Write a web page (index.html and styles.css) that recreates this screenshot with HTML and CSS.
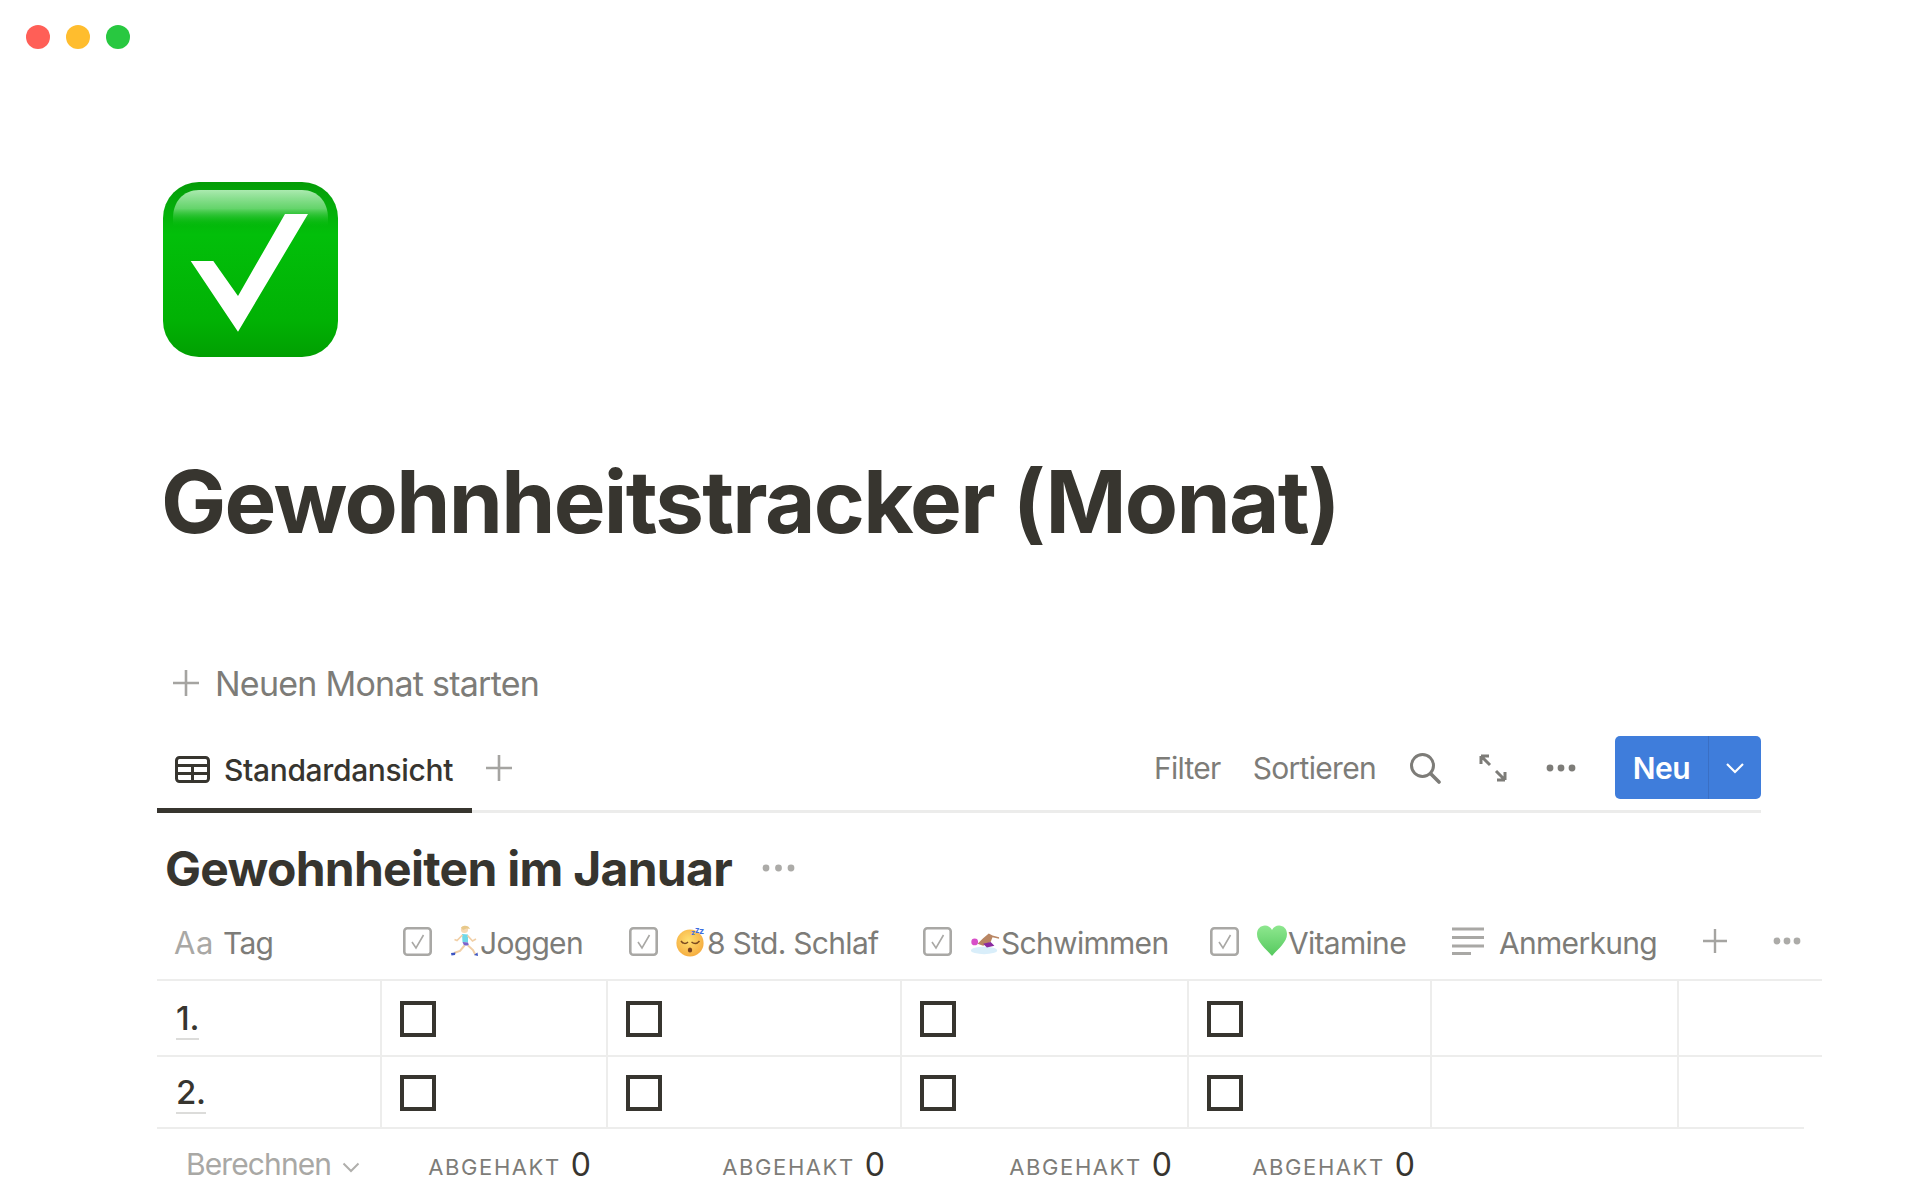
FILE: index.html
```html
<!DOCTYPE html>
<html lang="de">
<head>
<meta charset="utf-8">
<title>Gewohnheitstracker (Monat)</title>
<link rel="stylesheet" href="styles.css">
</head>
<body>
<div class="window-controls">
  <span class="dot dot-red"></span>
  <span class="dot dot-yellow"></span>
  <span class="dot dot-green"></span>
</div>
<main class="page">
  <svg class="page-icon" viewBox="0 0 175 175" aria-hidden="true">
    <defs>
      <linearGradient id="gbase" x1="0" y1="0" x2="0" y2="1">
        <stop offset="0" stop-color="#049c06"/><stop offset=".06" stop-color="#05a30a"/><stop offset=".3" stop-color="#02bf0a"/><stop offset=".8" stop-color="#01b104"/><stop offset="1" stop-color="#019f02"/>
      </linearGradient>
      <linearGradient id="ggloss" x1="0" y1="0" x2="0" y2="1">
        <stop offset="0" stop-color="#bdf2c2" stop-opacity=".9"/><stop offset=".5" stop-color="#a5eeac" stop-opacity=".6"/><stop offset="1" stop-color="#02bf0a" stop-opacity="0"/>
      </linearGradient>
    </defs>
    <rect width="175" height="175" rx="36" fill="url(#gbase)"/>
    <path d="M10 45V36C10 20 20 8 36 8H139C155 8 165 20 165 36V45Z" fill="url(#ggloss)"/>
    <path d="M27.700 79H50.300L75 114L122 32H145L75 149.700Z" fill="#fff"/>
  </svg>
  <h1 class="title">Gewohnheitstracker (Monat)</h1>
  <div class="new-month">
    <svg class="plus-lg" viewBox="0 0 28 28"><path d="M14 1V27M1 14H27" stroke="#a5a4a1" stroke-width="2.6" fill="none"/></svg>
    <span>Neuen Monat starten</span>
  </div>
  <div class="tabs">
    <div class="tab">
      <svg class="tab-icon" viewBox="0 0 35 27"><rect x="1.500" y="1.500" width="32" height="24" rx="3" fill="none" stroke="#37352f" stroke-width="3"/><path d="M1.500 9.500H33.500M1.500 17.500H33.500M17.500 9.500V25.500" stroke="#37352f" stroke-width="3" fill="none"/></svg>
      <span>Standardansicht</span>
    </div>
    <svg class="plus-lg tab-plus" viewBox="0 0 28 28"><path d="M14 1V27M1 14H27" stroke="#a5a4a1" stroke-width="2.6" fill="none"/></svg>
    <div class="toolbar">
      <span class="tool tool-filter">Filter</span>
      <span class="tool tool-sort">Sortieren</span>
      <svg class="tool-search" viewBox="0 0 32 32"><circle cx="13.500" cy="13.500" r="11" fill="none" stroke="#7d7c78" stroke-width="3"/><path d="M21.500 21.500L30 30" stroke="#7d7c78" stroke-width="3.600" stroke-linecap="round"/></svg>
      <svg class="tool-expand" viewBox="0 0 28 28"><path d="M2 2H10M2 2V10M2 2L11 11M26 26H18M26 26V18M26 26L17 17" stroke="#7d7c78" stroke-width="3" fill="none"/></svg>
      <svg class="tool-dots" viewBox="0 0 30 8"><circle cx="4" cy="4" r="3.400" fill="#7d7c78"/><circle cx="15" cy="4" r="3.400" fill="#7d7c78"/><circle cx="26" cy="4" r="3.400" fill="#7d7c78"/></svg>
      <div class="new-button">
        <span class="new-label">Neu</span>
        <span class="new-caret"><svg viewBox="0 0 20 12"><path d="M2 2L10 10L18 2" stroke="#fff" stroke-width="2.200" fill="none"/></svg></span>
      </div>
    </div>
  </div>
  <div class="table-head">
    <h2 class="table-title">Gewohnheiten im Januar</h2>
    <svg class="title-dots" viewBox="0 0 33 8"><circle cx="4" cy="4" r="3.400" fill="#acaba8"/><circle cx="16.500" cy="4" r="3.400" fill="#acaba8"/><circle cx="29" cy="4" r="3.400" fill="#acaba8"/></svg>
  </div>
  <div class="table">
    <div class="row header-row">
      <div class="hcell c1"><span class="aa">Aa</span><span>Tag</span></div>
      <div class="hcell c2">
        <svg class="prop-check" viewBox="0 0 29 29"><rect x="1.300" y="1.300" width="26.400" height="26.400" rx="3" fill="none" stroke="#a9a8a5" stroke-width="2.600"/><path d="M9 15L13 21L20.500 8" stroke="#a9a8a5" stroke-width="1.600" fill="none"/></svg>
        <svg class="emoji emoji-run" viewBox="0 0 30 32"><circle cx="14.500" cy="4.500" r="3.600" fill="#f6d9b4"/><path d="M11 2.500C14 -0.500 19 .5 20 4C18 3 15 3.500 13 5Z" fill="#e8c98a"/><path d="M12 9L18 9.500L18 17.500L12.500 17Z" fill="#6fd8e8"/><path d="M12.500 17L18 17.500L19 20.500L14 20.500Z" fill="#7b63c9"/><path d="M12.500 10L7 15.500L4.500 14.500" stroke="#f1cfa6" stroke-width="1.700" fill="none"/><path d="M17.500 10.500L22.500 16L26 14" stroke="#f1cfa6" stroke-width="1.700" fill="none"/><path d="M14.500 20.500L10 26L4 28" stroke="#f1cfa6" stroke-width="2" fill="none"/><path d="M18 20.500L23 25L25.500 30" stroke="#f1cfa6" stroke-width="2" fill="none"/><path d="M1 28L5.500 27.500L5 30L1.500 30.500Z" fill="#3d56c4"/><path d="M24 30L27.500 27.500L28 31Z" fill="#3d56c4"/></svg>
        <span>Joggen</span>
      </div>
      <div class="hcell c3">
        <svg class="prop-check" viewBox="0 0 29 29"><rect x="1.300" y="1.300" width="26.400" height="26.400" rx="3" fill="none" stroke="#a9a8a5" stroke-width="2.600"/><path d="M9 15L13 21L20.500 8" stroke="#a9a8a5" stroke-width="1.600" fill="none"/></svg>
        <svg class="emoji" viewBox="0 0 30 32"><defs><radialGradient id="gsleep" cx=".45" cy=".4" r=".65"><stop offset="0" stop-color="#ffdf70"/><stop offset="1" stop-color="#f5a93c"/></radialGradient></defs><circle cx="14" cy="18" r="13.600" fill="url(#gsleep)"/><path d="M5 16C7 19 10 19 12 17M15.500 17C18 19 21 19 23.500 16" stroke="#7a4a20" stroke-width="1.500" fill="none"/><ellipse cx="14" cy="25" rx="2.200" ry="2.600" fill="#7a4320"/><text class="zzz zzz-a" x="15" y="10">z</text><text class="zzz zzz-b" x="19" y="8">z</text><text class="zzz zzz-c" x="23" y="9">z</text></svg>
        <span>8 Std. Schlaf</span>
      </div>
      <div class="hcell c4">
        <svg class="prop-check" viewBox="0 0 29 29"><rect x="1.300" y="1.300" width="26.400" height="26.400" rx="3" fill="none" stroke="#a9a8a5" stroke-width="2.600"/><path d="M9 15L13 21L20.500 8" stroke="#a9a8a5" stroke-width="1.600" fill="none"/></svg>
        <svg class="emoji" viewBox="0 0 32 32"><ellipse cx="15" cy="26" rx="14" ry="4" fill="#d9eefa"/><path d="M8 19L14 13L20 8L24 10L31 12L31 13.500L24 12L22 17L14 21Z" fill="#b98663"/><path d="M14 19L22 17L26 21L18 23Z" fill="#8a2aa0"/><circle cx="5" cy="17" r="3.600" fill="#d84fc8"/></svg>
        <span>Schwimmen</span>
      </div>
      <div class="hcell c5">
        <svg class="prop-check" viewBox="0 0 29 29"><rect x="1.300" y="1.300" width="26.400" height="26.400" rx="3" fill="none" stroke="#a9a8a5" stroke-width="2.600"/><path d="M9 15L13 21L20.500 8" stroke="#a9a8a5" stroke-width="1.600" fill="none"/></svg>
        <svg class="emoji" viewBox="0 0 30 32"><defs><linearGradient id="gheart" x1="0" y1="0" x2="0" y2="1"><stop offset="0" stop-color="#8ee78f"/><stop offset="1" stop-color="#55c95e"/></linearGradient></defs><path d="M15 31C8 23 0 17 0 9C0 4 3.500 .5 8 .5C11 .5 13.500 2 15 5C16.500 2 19 .5 22 .5C26.500 .5 30 4 30 9C30 17 22 23 15 31Z" fill="url(#gheart)"/></svg>
        <span>Vitamine</span>
      </div>
      <div class="hcell c6">
        <svg class="prop-text" viewBox="0 0 32 28"><path d="M0 2H32M0 10.500H32M0 19H32M0 26.500H19" stroke="#a9a8a5" stroke-width="2.800" fill="none"/></svg>
        <span>Anmerkung</span>
      </div>
      <div class="hcell c7">
        <svg class="plus-sm" viewBox="0 0 24 24"><path d="M12 0V24M0 12H24" stroke="#a5a4a1" stroke-width="2.400" fill="none"/></svg>
        <svg class="head-dots" viewBox="0 0 28 8"><circle cx="4" cy="4" r="3.400" fill="#acaba8"/><circle cx="14" cy="4" r="3.400" fill="#acaba8"/><circle cx="24" cy="4" r="3.400" fill="#acaba8"/></svg>
      </div>
    </div>
    <div class="row body-row">
      <div class="cell c1"><span class="day">1.</span></div>
      <div class="cell c2"><span class="box"></span></div>
      <div class="cell c3"><span class="box"></span></div>
      <div class="cell c4"><span class="box"></span></div>
      <div class="cell c5"><span class="box"></span></div>
      <div class="cell c6"></div>
      <div class="cell c7"></div>
    </div>
    <div class="row body-row body-row-last">
      <div class="cell c1"><span class="day">2.</span></div>
      <div class="cell c2"><span class="box"></span></div>
      <div class="cell c3"><span class="box"></span></div>
      <div class="cell c4"><span class="box"></span></div>
      <div class="cell c5"><span class="box"></span></div>
      <div class="cell c6"></div>
      <div class="cell c7"></div>
    </div>
    <div class="row footer-row">
      <div class="fcell c1 calc"><span>Berechnen</span><svg class="calc-caret" viewBox="0 0 18 11"><path d="M1.500 1.500L9 9L16.500 1.500" stroke="#b0afac" stroke-width="2" fill="none"/></svg></div>
      <div class="fcell c2"><span class="f-label">Abgehakt</span><span class="f-value">0</span></div>
      <div class="fcell c3"><span class="f-label">Abgehakt</span><span class="f-value">0</span></div>
      <div class="fcell c4"><span class="f-label">Abgehakt</span><span class="f-value">0</span></div>
      <div class="fcell c5"><span class="f-label">Abgehakt</span><span class="f-value">0</span></div>
    </div>
  </div>
</main>
</body>
</html>
```

FILE: styles.css
```css
* { box-sizing: border-box; }
html, body { margin: 0; padding: 0; }
body {
  width: 1920px;
  height: 1200px;
  overflow: hidden;
  background: #fff;
  color: #37352f;
  font-family: Inter, "Liberation Sans", sans-serif;
}
.window-controls { display: flex; gap: 16px; padding: 25px 0 0 26px; height: 182px; }
.dot { width: 24px; height: 24px; border-radius: 50%; }
.dot-red { background: #ff5f57; }
.dot-yellow { background: #ffbd2e; }
.dot-green { background: #28c840; }

.page { padding-left: 157px; width: 1822px; }
.page-icon { display: block; width: 175px; height: 175px; margin-left: 6px; }
.title {
  margin: 95px 0 0;
  height: 100px;
  padding-left: 4px;
  font-size: 87px;
  line-height: 100px;
  font-weight: 700;
  letter-spacing: -1.7px;
  white-space: nowrap;
}
.new-month {
  display: flex;
  align-items: center;
  gap: 15px;
  margin-top: 111px;
  padding-left: 15px;
  height: 40px;
  color: #7d7c78;
  font-size: 34px;
  letter-spacing: -.75px;
}
.plus-lg { width: 28px; height: 28px; flex: none; }

.tabs {
  display: flex;
  align-items: center;
  width: 1604px;
  height: 80px;
  margin-top: 30px;
  border-bottom: 3px solid #ececeb;
}
.tab {
  display: flex;
  align-items: center;
  gap: 14px;
  align-self: flex-start;
  width: 315px;
  height: 80px;
  padding-left: 18px;
  padding-bottom: 2px;
  font-size: 30px;
  font-weight: 500;
  letter-spacing: -.35px;
  border-bottom: 5px solid #37352f;
}
.tab-icon { width: 35px; height: 27px; flex: none; }
.tab-plus { margin-left: 13px; margin-bottom: 7px; }
.toolbar {
  display: flex;
  align-items: center;
  align-self: flex-start;
  margin-left: auto;
  margin-top: 3px;
  height: 63px;
  color: #7d7c78;
  font-size: 30px;
  letter-spacing: -.7px;
}
.tool-filter { margin-right: 32px; }
.tool-sort { margin-right: 33px; }
.tool-search { width: 32px; height: 32px; margin-right: 38px; }
.tool-expand { width: 28px; height: 28px; margin-right: 39px; }
.tool-dots { width: 30px; height: 8px; margin-right: 39px; }
.new-button {
  display: flex;
  width: 146px;
  height: 63px;
  border-radius: 5px;
  background: #3f7ddb;
  color: #fff;
  font-size: 30px;
  font-weight: 600;
  letter-spacing: -.5px;
}
.new-label { width: 94px; display: flex; align-items: center; justify-content: center; border-right: 1px solid #3a6fc4; }
.new-caret { flex: 1; display: flex; align-items: center; justify-content: center; }
.new-caret svg { width: 20px; height: 12px; }

.table-head { display: flex; align-items: center; gap: 30px; height: 68px; margin-top: 22px; padding-left: 8px; }
.table-title { margin: 0; font-size: 48px; line-height: 68px; font-weight: 700; letter-spacing: -.73px; white-space: nowrap; }
.title-dots { width: 33px; height: 8px; margin-bottom: 2px; }

.row { display: grid; grid-template-columns: 225px 226px 294px 287px 243px 247px 144px; }
.header-row { height: 78px; border-bottom: 2px solid #ededec; align-items: center; }
.hcell { display: flex; align-items: center; height: 100%; padding-top: 3px; color: #7d7c78; font-size: 30px; letter-spacing: -.7px; white-space: nowrap; }
.hcell.c1 { padding-left: 17px; }
.aa { width: 49px; color: #a9a8a5; letter-spacing: .5px; font-size: 31px; }
.hcell.c2, .hcell.c3, .hcell.c4, .hcell.c5 { padding-left: 21px; }
.prop-check { width: 29px; height: 29px; margin-top: -3px; margin-right: 18px; flex: none; }
.emoji { width: 30px; height: 32px; margin-top: -3px; margin-right: 1px; flex: none; }
.emoji-run { margin-right: 0; }
.zzz { font-size: 9px; font-weight: 700; fill: #3f6fe0; }
.zzz-a { font-size: 7px; }
.zzz-b { font-size: 8px; }
.hcell.c6 { padding-left: 20px; }
.prop-text { width: 32px; height: 28px; margin-top: -3px; margin-right: 15px; flex: none; }
.hcell.c7 { padding-left: 24px; gap: 46px; }
.plus-sm { width: 24px; height: 24px; margin-top: -3px; flex: none; }
.head-dots { width: 28px; height: 8px; margin-top: -4px; flex: none; }

.body-row { height: 76px; border-bottom: 2px solid #ededec; }
.body-row-last { height: 72px; width: 1647px; }
.cell { display: flex; align-items: center; padding-top: 2px; border-right: 2px solid #ededec; }
.cell.c1 { padding-left: 19px; font-size: 33px; font-weight: 500; letter-spacing: -.3px; }
.cell.c2, .cell.c3, .cell.c4, .cell.c5 { padding-left: 18px; }
.cell.c7 { border-right: none; }
.day { border-bottom: 2px solid #dcdcda; line-height: 40px; }
.box { display: block; width: 36px; height: 36px; border: 4px solid #37352f; }

.footer-row { height: 70px; align-items: center; }
.fcell { display: flex; align-items: center; justify-content: flex-end; gap: 10px; padding-right: 17px; height: 100%; }
.fcell.calc { justify-content: flex-start; padding-left: 29px; padding-right: 0; gap: 11px; color: #a9a8a5; font-size: 30px; letter-spacing: -.9px; }
.calc-caret { width: 18px; height: 11px; margin-top: 6px; flex: none; }
.f-label { text-transform: uppercase; color: #7d7c78; font-size: 22px; letter-spacing: 1.6px; margin-top: 6px; }
.f-value { font-size: 32px; color: #37352f; }
```
